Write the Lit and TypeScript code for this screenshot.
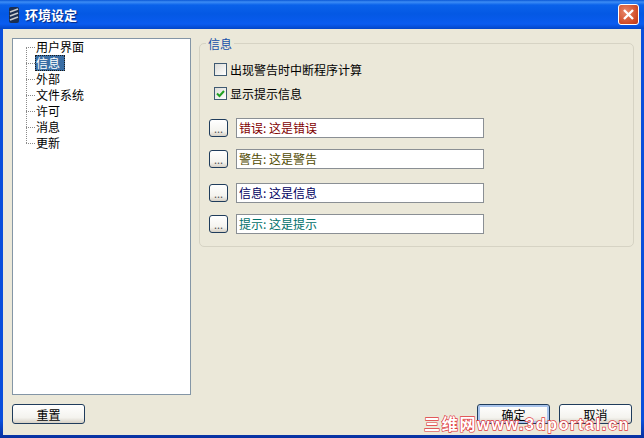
import { html, css, LitElement } from "lit"
import { customElement } from "lit/decorators.js"

const TREE = ["用户界面", "信息", "外部", "文件系统", "许可", "消息", "更新"]

const FIELDS = [
  { text: "错误: 这是错误", cls: "err", wide: false },
  { text: "警告: 这是警告", cls: "warn", wide: false },
  { text: "信息: 这是信息", cls: "info", wide: true },
  { text: "提示: 这是提示", cls: "hint", wide: false },
]

@customElement("app-root")
export class AppRoot extends LitElement {
  static styles = css`
    :host {
      display: block;
      position: relative;
      width: 644px;
      height: 438px;
      overflow: hidden;
      font: 12px "Noto Sans CJK SC", "Liberation Sans", sans-serif;
      color: #000;
    }
    .window {
      display: flex;
      flex-direction: column;
      height: 438px;
      background: linear-gradient(#0a4fdc 96%, #08309e);
    }
    .title {
      flex: none;
      height: 29px;
      display: flex;
      align-items: center;
      padding: 0 5px 0 8px;
      gap: 5px;
      background: linear-gradient(#0a57d6 0, #3d8df5 2px, #0a62ea 5px, #0458e4 14px, #0a5cf0 24px, #0346c8 29px);
    }
    .title svg.logo {
      flex: none;
    }
    .title span {
      flex: 1;
      color: #fff;
      font-weight: 700;
      font-size: 13px;
      text-shadow: 1px 1px 1px #0a2a80;
    }
    .close {
      width: 21px;
      height: 21px;
      border: 1px solid #fff;
      border-radius: 3px;
      box-sizing: border-box;
      background: radial-gradient(circle at 35% 35%, #e8876a, #cf4a25 70%, #b8381a);
      display: flex;
      align-items: center;
      justify-content: center;
    }
    .body {
      flex: 1;
      margin: 0 3px 3px 3px;
      padding: 9px 0 0 9px;
      background: #ebe8d9;
      display: grid;
      grid-template-columns: 179px 435px;
      grid-template-rows: 357px auto;
      column-gap: 8px;
      row-gap: 9px;
      align-content: start;
    }
    .tree {
      border: 1px solid #8496a6;
      background: #fff;
      box-sizing: border-box;
    }
    .node {
      height: 16px;
      line-height: 16px;
      padding-left: 23px;
      background:
        repeating-linear-gradient(90deg, #8a8a8a 0 1px, transparent 1px 2px) 13px 8px / 9px 1px no-repeat,
        repeating-linear-gradient(0deg, #8a8a8a 0 1px, transparent 1px 2px) 13px 0 / 1px 100% no-repeat;
    }
    .node.first {
      background:
        repeating-linear-gradient(90deg, #8a8a8a 0 1px, transparent 1px 2px) 13px 8px / 9px 1px no-repeat,
        repeating-linear-gradient(0deg, #8a8a8a 0 1px, transparent 1px 2px) 13px 8px / 1px 8px no-repeat;
    }
    .node.last {
      background:
        repeating-linear-gradient(90deg, #8a8a8a 0 1px, transparent 1px 2px) 13px 8px / 9px 1px no-repeat,
        repeating-linear-gradient(0deg, #8a8a8a 0 1px, transparent 1px 2px) 13px 0 / 1px 8px no-repeat;
    }
    .node span {
      display: inline-block;
      height: 16px;
    }
    .node.sel span {
      background: #3a6ea5;
      color: #fff;
      outline: 1px dotted #1a1a1a;
      outline-offset: -1px;
      margin-left: -1px;
      padding: 0 5px 0 1px;
    }
    .group {
      position: relative;
      margin-top: 5px;
      height: 204px;
      box-sizing: border-box;
      border: 1px solid #d6d3c4;
      border-radius: 5px;
      padding: 19px 0 0 9px;
    }
    .legend {
      position: absolute;
      left: 6px;
      top: -8px;
      padding: 0 2px;
      background: #ebe8d9;
      color: #1450a8;
      line-height: 16px;
    }
    .check {
      display: flex;
      align-items: center;
      gap: 3px;
      height: 13px;
      margin-left: 5px;
      margin-bottom: 11px;
    }
    .box {
      width: 13px;
      height: 13px;
      box-sizing: border-box;
      border: 1px solid #3f5a72;
      background: linear-gradient(135deg, #dcdcd7, #fff);
    }
    .box svg {
      display: block;
    }
    .rows {
      margin-top: 18px;
    }
    .row {
      display: flex;
      align-items: center;
      gap: 8px;
      height: 20px;
      margin-bottom: 11px;
    }
    .row.wide {
      margin-top: 14px;
    }
    .btn {
      box-sizing: border-box;
      border: 1px solid #1f3c5c;
      border-radius: 3px;
      background: linear-gradient(#fff, #f4f3ee 70%, #d6d0c5);
      display: flex;
      align-items: center;
      justify-content: center;
    }
    .dots {
      width: 19px;
      height: 18px;
      font-size: 11px;
      color: #555;
    }
    .input {
      width: 248px;
      height: 20px;
      box-sizing: border-box;
      border: 1px solid #8a8f94;
      background: #fff;
      padding-left: 2px;
      line-height: 18px;
    }
    .err { color: #7f0000; }
    .warn { color: #4f4a00; }
    .info { color: #00005f; }
    .hint { color: #00706a; }
    .footer {
      grid-column: 1 / 3;
      display: flex;
      padding-right: 2px;
    }
    .push {
      width: 73px;
      height: 20px;
    }
    .push.reset {
      margin-right: auto;
    }
    .push.ok {
      margin-right: 9px;
      box-shadow: inset 0 0 0 2px #a9c4ec;
    }
    .mark {
      position: absolute;
      left: 424px;
      top: 416px;
      font: 700 16px "Liberation Sans", "Noto Sans CJK SC", sans-serif;
      line-height: 18px;
      letter-spacing: 1.7px;
      color: #fff;
      -webkit-text-stroke: 1.3px #e0383c;
      paint-order: stroke fill;
      white-space: nowrap;
    }
  `

  render() {
    return html`
      <div class="window">
        <div class="title">
          <svg class="logo" width="12" height="16" viewBox="0 0 12 16">
            <rect x="1" width="10" height="16" rx="2" fill="#1c2f52" />
            <path d="M2 5 10 2M2 9 10 6M2 13 10 10" stroke="#c8ccd0" stroke-width="1.6" />
          </svg>
          <span>环境设定</span>
          <div class="close">
            <svg width="13" height="13" viewBox="0 0 13 13">
              <path d="M2 2 11 11M11 2 2 11" stroke="#fff" stroke-width="2.4" />
            </svg>
          </div>
        </div>
        <div class="body">
          <div class="tree">
            ${TREE.map(
              (t, i) => html`<div class="node ${i === 0 ? "first" : ""} ${i === TREE.length - 1 ? "last" : ""} ${i === 1 ? "sel" : ""}"><span>${t}</span></div>`
            )}
          </div>
          <div class="group">
            <div class="legend">信息</div>
            <div class="check"><div class="box"></div>出现警告时中断程序计算</div>
            <div class="check">
              <div class="box">
                <svg width="11" height="11" viewBox="0 0 11 11">
                  <path d="M2 5.5 4.5 8 9 3" fill="none" stroke="#21a121" stroke-width="2" />
                </svg>
              </div>
              显示提示信息
            </div>
            <div class="rows">
              ${FIELDS.map(
                (f) => html`
                  <div class="row ${f.wide ? "wide" : ""}">
                    <div class="btn dots">...</div>
                    <div class="input ${f.cls}">${f.text}</div>
                  </div>
                `
              )}
            </div>
          </div>
          <div class="footer">
            <div class="btn push reset">重置</div>
            <div class="btn push ok">确定</div>
            <div class="btn push">取消</div>
          </div>
        </div>
      </div>
      <div class="mark">三维网www.3dportal.cn</div>
    `
  }
}

declare global {
  interface HTMLElementTagNameMap {
    "app-root": AppRoot
  }
}
